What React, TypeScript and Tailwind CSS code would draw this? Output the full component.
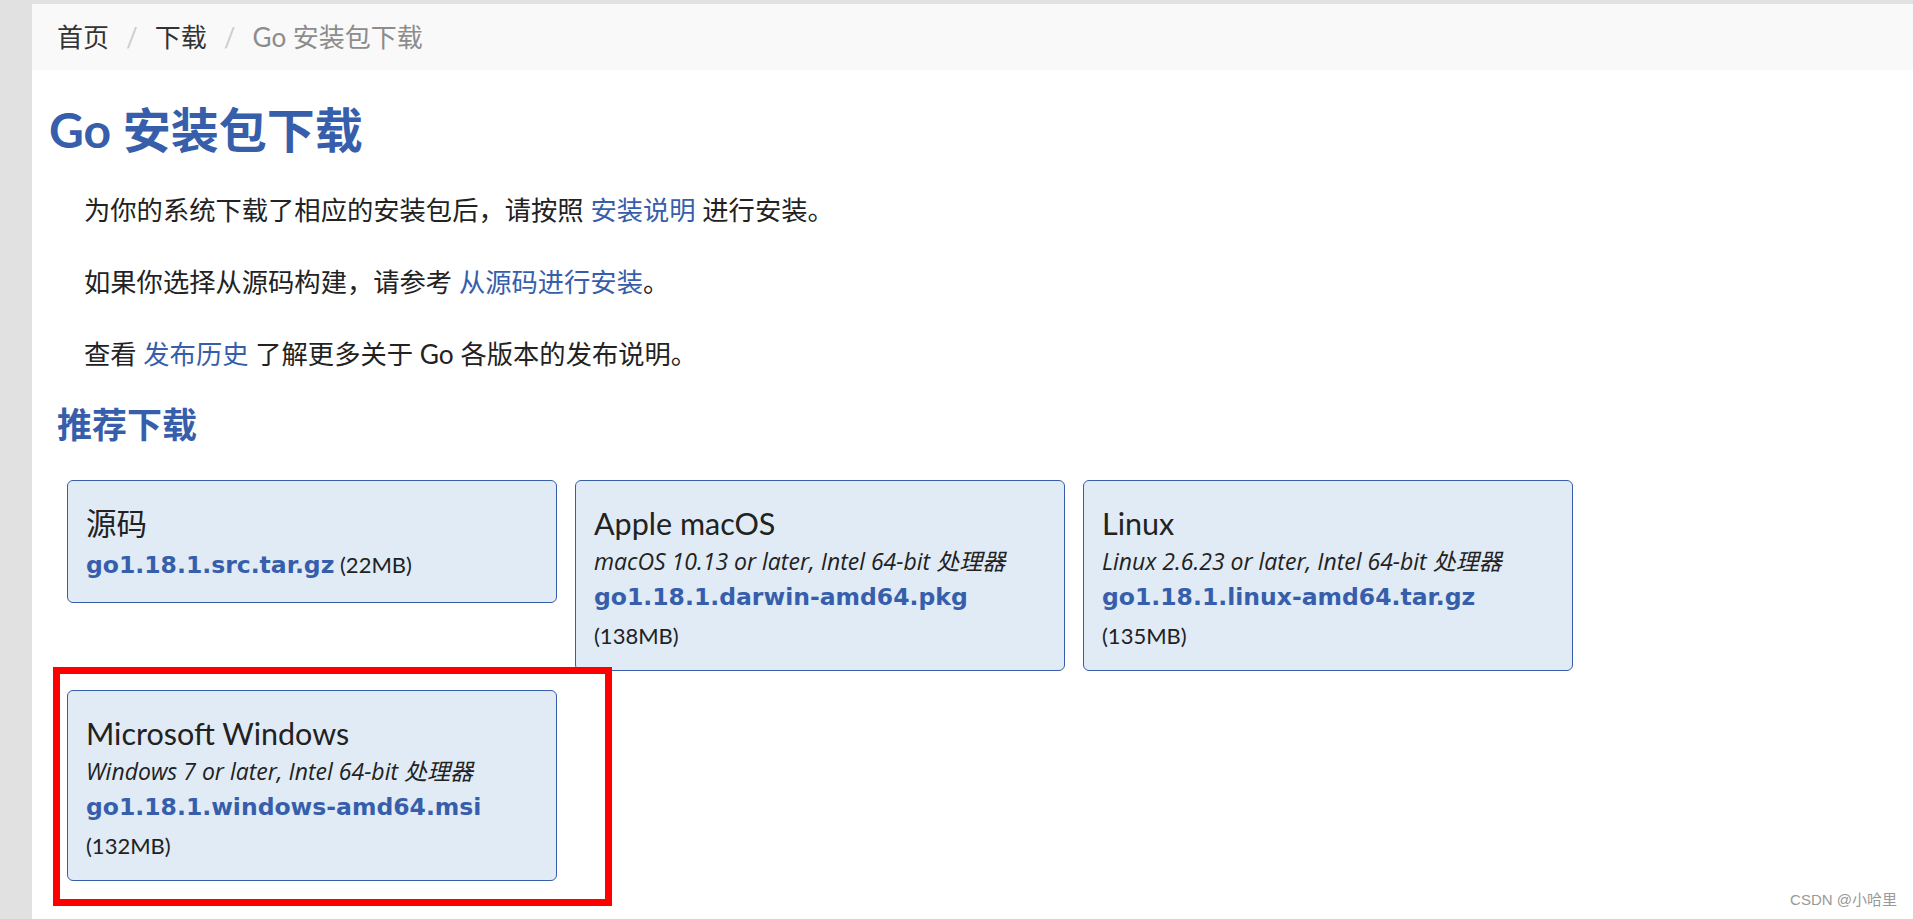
import React from 'react';

type Pkg = {
  os: string;
  req?: string;
  file: string;
  size: string;
  marked?: boolean;
};

const pkgs: Pkg[] = [
  { os: '源码', file: 'go1.18.1.src.tar.gz', size: '(22MB)' },
  {
    os: 'Apple macOS',
    req: 'macOS 10.13 or later, Intel 64-bit 处理器',
    file: 'go1.18.1.darwin-amd64.pkg',
    size: '(138MB)',
  },
  {
    os: 'Linux',
    req: 'Linux 2.6.23 or later, Intel 64-bit 处理器',
    file: 'go1.18.1.linux-amd64.tar.gz',
    size: '(135MB)',
  },
  {
    os: 'Microsoft Windows',
    req: 'Windows 7 or later, Intel 64-bit 处理器',
    file: 'go1.18.1.windows-amd64.msi',
    size: '(132MB)',
    marked: true,
  },
];

const DownloadBox = ({ pkg }: { pkg: Pkg }) => {
  const fileCls =
    "font-['DejaVu_Sans',sans-serif] font-bold text-[23.5px] text-[#375eab] leading-[40px]";

  return (
    <div className="relative w-[490px]">
      <a
        href="#"
        className="block rounded-[6px] border border-[#375eab] bg-[#e0ebf5] px-[18px] pt-[20px] pb-[15px] text-[#222]"
      >
        <div className="text-[30.5px] leading-[44px]">{pkg.os}</div>
        {pkg.req && (
          <div className="font-['Open_Sans','Noto_Sans_CJK_SC',sans-serif] text-[23px] italic leading-[32px]">
            {pkg.req}
          </div>
        )}
        {pkg.req ? (
          <>
            <div className={fileCls}>{pkg.file}</div>
            <div className="text-[22px] leading-[38px]">{pkg.size}</div>
          </>
        ) : (
          <div className="leading-[40px]">
            <span className={fileCls}>{pkg.file}</span>
            <span className="text-[22px]"> {pkg.size}</span>
          </div>
        )}
      </a>
      {/* annotation frame */}
      {pkg.marked && (
        <span className="pointer-events-none absolute left-[-14px] top-[-23px] right-[-55px] bottom-[-25px] border-[7px] border-[#ff0000]"></span>
      )}
    </div>
  );
};

const App = () => {
  return (
    <div className="relative min-h-screen bg-[#e1e1e1] pl-[32px] pt-[4px] font-['Lato','Noto_Sans_CJK_SC',sans-serif] text-[#222]">
      <div className="min-h-[915px] bg-white">
        {/* Breadcrumb */}
        <div className="flex h-[66px] items-center bg-[#f9f9f9] pl-[25px] text-[26px]">
          <a href="#" className="text-[#333]">首页</a>
          <span className="px-[17px] text-[#ccc]">/</span>
          <a href="#" className="text-[#333]">下载</a>
          <span className="px-[17px] text-[#ccc]">/</span>
          <span className="text-[#8c8c8c]">Go 安装包下载</span>
        </div>

        <h1 className="ml-[17px] mt-[32px] text-[48px] font-bold leading-[56px] text-[#375eab]">
          Go 安装包下载
        </h1>

        <div className="ml-[52px] mt-[34px] flex flex-col gap-[36px] text-[26.3px] leading-[36px]">
          <p>
            为你的系统下载了相应的安装包后，请按照 <a href="#" className="text-[#375eab]">安装说明</a> 进行安装。
          </p>
          <p>
            如果你选择从源码构建，请参考 <a href="#" className="text-[#375eab]">从源码进行安装</a>。
          </p>
          <p>
            查看 <a href="#" className="text-[#375eab]">发布历史</a> 了解更多关于 Go 各版本的发布说明。
          </p>
        </div>

        <h2 className="ml-[25px] mt-[30px] text-[35px] font-bold leading-[44px] text-[#375eab]">推荐下载</h2>

        <div className="ml-[35px] mt-[34px] flex flex-wrap items-start gap-x-[18px] gap-y-[19px]">
          {pkgs.map((p) => (
            <DownloadBox key={p.file} pkg={p} />
          ))}
        </div>
      </div>

      {/* watermark */}
      <div className="absolute right-[16px] bottom-[8px] text-[15px] text-[#999] font-['Liberation_Sans','Noto_Sans_CJK_SC',sans-serif]">
        CSDN @小哈里
      </div>
    </div>
  );
};

export default App;
